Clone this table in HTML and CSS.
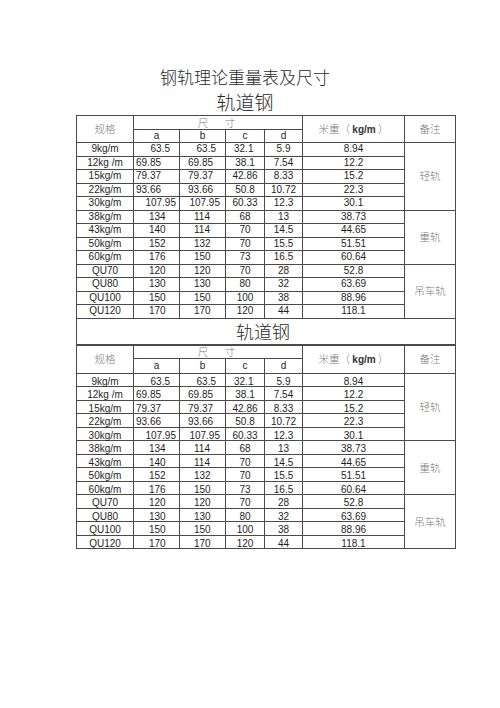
FILE: index.html
```html
<!DOCTYPE html>
<html lang="zh-CN">
<head>
<meta charset="utf-8">
<title>钢轨理论重量表及尺寸</title>
<link rel="stylesheet" href="styles.css">
</head>
<body>
<div class="sheet">
  <h1 class="title-main">钢轨理论重量表及尺寸</h1>
  <h2 class="title-sub">轨道钢</h2>

  <table class="rail">
    <colgroup>
      <col class="c-spec"><col class="c-a"><col class="c-b"><col class="c-c"><col class="c-d"><col class="c-w"><col class="c-n">
    </colgroup>
    <tr class="hd1">
      <th rowspan="2" class="cjk">规格</th>
      <th colspan="4" class="cjk dim">尺&emsp;寸</th>
      <th rowspan="2" class="cjk">米重（ <b class="unit">kg/m</b> ）</th>
      <th rowspan="2" class="cjk">备注</th>
    </tr>
    <tr class="hd2">
      <th class="abc">a</th><th class="abc">b</th><th class="abc">c</th><th class="abc">d</th>
    </tr>
    <tr><td>9kg/m</td><td class="ra9">63.5</td><td class="rb9">63.5</td><td class="lc">32.1</td><td>5.9</td><td>8.94</td><td rowspan="5" class="cjk note">轻轨</td></tr>
    <tr><td>12kg /m</td><td class="la">69.85</td><td class="lb">69.85</td><td>38.1</td><td>7.54</td><td>12.2</td></tr>
    <tr><td>15kg/m</td><td class="la">79.37</td><td class="lb">79.37</td><td>42.86</td><td>8.33</td><td>15.2</td></tr>
    <tr><td>22kg/m</td><td class="la">93.66</td><td class="lb">93.66</td><td>50.8</td><td>10.72</td><td>22.3</td></tr>
    <tr><td>30kg/m</td><td class="ra3">107.95</td><td class="rb5">107.95</td><td>60.33</td><td>12.3</td><td>30.1</td></tr>
    <tr><td>38kg/m</td><td class="ma">134</td><td class="mb">114</td><td>68</td><td>13</td><td>38.73</td><td rowspan="4" class="cjk note">重轨</td></tr>
    <tr><td>43kg/m</td><td class="ma">140</td><td class="mb">114</td><td>70</td><td>14.5</td><td>44.65</td></tr>
    <tr><td>50kg/m</td><td class="ma">152</td><td class="mb">132</td><td>70</td><td>15.5</td><td>51.51</td></tr>
    <tr><td>60kg/m</td><td class="ma">176</td><td class="mb">150</td><td>73</td><td>16.5</td><td>60.64</td></tr>
    <tr><td>QU70</td><td class="ma">120</td><td class="mb">120</td><td>70</td><td>28</td><td>52.8</td><td rowspan="4" class="cjk note">吊车轨</td></tr>
    <tr><td>QU80</td><td class="ma">130</td><td class="mb">130</td><td>80</td><td>32</td><td>63.69</td></tr>
    <tr><td>QU100</td><td class="ma">150</td><td class="mb">150</td><td>100</td><td>38</td><td>88.96</td></tr>
    <tr><td>QU120</td><td class="ma">170</td><td class="mb">170</td><td>120</td><td>44</td><td>118.1</td></tr>
    <tr class="caption-row"><td colspan="7" class="caption">轨道钢</td></tr>
  </table>

  <table class="rail rail--scan">
    <colgroup>
      <col class="c-spec"><col class="c-a"><col class="c-b"><col class="c-c"><col class="c-d"><col class="c-w"><col class="c-n">
    </colgroup>
    <tr class="hd1b">
      <th rowspan="2" class="cjk">规格</th>
      <th colspan="4" class="cjk dim">尺&emsp;寸</th>
      <th rowspan="2" class="cjk">米重（ <b class="unit">kg/m</b> ）</th>
      <th rowspan="2" class="cjk">备注</th>
    </tr>
    <tr class="hd2b">
      <th class="abc">a</th><th class="abc">b</th><th class="abc">c</th><th class="abc">d</th>
    </tr>
    <tr><td>9kg/m</td><td class="ra9">63.5</td><td class="rb9">63.5</td><td class="lc">32.1</td><td>5.9</td><td>8.94</td><td rowspan="5" class="cjk note">轻轨</td></tr>
    <tr><td>12kg /m</td><td class="la">69.85</td><td class="lb">69.85</td><td>38.1</td><td>7.54</td><td>12.2</td></tr>
    <tr><td>15kg/m</td><td class="la">79.37</td><td class="lb">79.37</td><td>42.86</td><td>8.33</td><td>15.2</td></tr>
    <tr><td>22kg/m</td><td class="la">93.66</td><td class="lb">93.66</td><td>50.8</td><td>10.72</td><td>22.3</td></tr>
    <tr><td>30kg/m</td><td class="ra3">107.95</td><td class="rb5">107.95</td><td>60.33</td><td>12.3</td><td>30.1</td></tr>
    <tr><td>38kg/m</td><td class="ma">134</td><td class="mb">114</td><td>68</td><td>13</td><td>38.73</td><td rowspan="4" class="cjk note">重轨</td></tr>
    <tr><td>43kg/m</td><td class="ma">140</td><td class="mb">114</td><td>70</td><td>14.5</td><td>44.65</td></tr>
    <tr><td>50kg/m</td><td class="ma">152</td><td class="mb">132</td><td>70</td><td>15.5</td><td>51.51</td></tr>
    <tr><td>60kg/m</td><td class="ma">176</td><td class="mb">150</td><td>73</td><td>16.5</td><td>60.64</td></tr>
    <tr><td>QU70</td><td class="ma">120</td><td class="mb">120</td><td>70</td><td>28</td><td>52.8</td><td rowspan="4" class="cjk note">吊车轨</td></tr>
    <tr><td>QU80</td><td class="ma">130</td><td class="mb">130</td><td>80</td><td>32</td><td>63.69</td></tr>
    <tr><td>QU100</td><td class="ma">150</td><td class="mb">150</td><td>100</td><td>38</td><td>88.96</td></tr>
    <tr><td>QU120</td><td class="ma">170</td><td class="mb">170</td><td>120</td><td>44</td><td>118.1</td></tr>
  </table>
</div>
</body>
</html>
```

FILE: styles.css
```css
html, body {
  margin: 0;
  padding: 0;
  background: #ffffff;
}

.sheet {
  width: 500px;
  height: 708px;
  padding-top: 66px;
  box-sizing: border-box;
  font-family: "Liberation Sans", Arial, sans-serif;
  color: #1e1e1e;
}

.title-main,
.title-sub {
  margin: 0;
  padding-right: 10px;
  text-align: center;
  font-family: "Noto Sans CJK SC", sans-serif;
  font-weight: 300;
  color: #2a2a2a;
}

.title-main {
  font-size: 17px;
  line-height: 22px;
  height: 22px;
}

.title-sub {
  font-size: 19px;
  line-height: 27px;
  height: 27px;
}

.rail {
  margin-left: 76px;
  width: 379px;
  table-layout: fixed;
  border-collapse: collapse;
  border: 1.5px solid #3a3a3a;
  font-size: 10px;
}

.c-spec { width: 57px; }
.c-a { width: 46px; }
.c-b { width: 46px; }
.c-c { width: 39px; }
.c-d { width: 38px; }
.c-w { width: 102px; }
.c-n { width: 51px; }

.rail th,
.rail td {
  border: 1px solid #4a4a4a;
  padding: 0;
  text-align: center;
  vertical-align: middle;
  font-weight: normal;
  line-height: 12px;
  white-space: nowrap;
  overflow: visible;
}

.rail tr { height: 13.5px; }
.rail .hd1 { height: 14px; }
.rail .hd2 { height: 13px; }

.rail .cjk {
  font-family: "Noto Sans CJK SC", sans-serif;
  font-weight: 300;
  font-size: 10.5px;
  color: #7a7a7a;
}

.rail .dim { letter-spacing: 3px; }

.rail .unit {
  font-family: "Liberation Sans", Arial, sans-serif;
  font-size: 10px;
  font-weight: bold;
  color: #333;
}

.rail .abc { color: #1e1e1e; }

/* per-cell alignments copied from the source document */
.rail .ra9 { text-align: right; padding-right: 9px; }
.rail .rb9 { text-align: right; padding-right: 9px; }
.rail .ra3 { text-align: right; padding-right: 3px; }
.rail .rb5 { text-align: right; padding-right: 5px; }
.rail .la { text-align: left; padding-left: 2px; }
.rail .lb { text-align: left; padding-left: 8px; }
.rail .lc { text-align: left; padding-left: 8px; }
.rail .ma { text-align: left; padding-left: 15px; }
.rail .mb { text-align: left; padding-left: 14px; }

.rail .caption-row { height: 26px; }

.rail .caption {
  font-family: "Noto Sans CJK SC", sans-serif;
  font-weight: 300;
  font-size: 18px;
  line-height: 25px;
  color: #2a2a2a;
  padding-right: 6px;
}

/* second copy: scanned slightly off, text sits on the ruling */
.rail--scan {
  border-top: 1.5px solid #3a3a3a;
}

.rail--scan .hd1b { height: 13px; }
.rail--scan .hd2b { height: 15px; }

.rail--scan td {
  vertical-align: top;
  padding-top: 4px;
  line-height: 8px;
}

.rail--scan td.note {
  vertical-align: middle;
  padding-top: 0;
  line-height: 12px;
}
```
